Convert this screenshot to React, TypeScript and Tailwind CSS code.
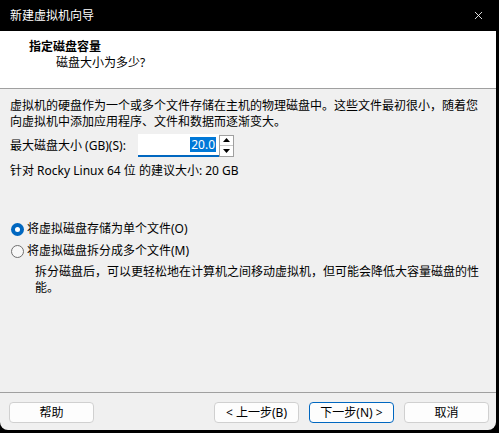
import React, { useState } from 'react';
import { X } from 'lucide-react';

const font = { fontFamily: '"Noto Sans", "Noto Sans CJK SC", sans-serif' };

const WizardButton: React.FC<{ label: string; primary?: boolean }> = ({ label, primary }) => (
  <button
    className={`w-[85px] h-[21px] rounded-[4px] bg-[#fdfdfd] text-[12px] leading-none text-black flex items-center justify-center border ${
      primary ? 'border-[#0067c0]' : 'border-[#d0d0d0]'
    }`}
  >
    {label}
  </button>
);

const Radio: React.FC<{ checked: boolean; label: string; onClick: () => void }> = ({ checked, label, onClick }) => (
  <div className="flex items-center h-[16px] cursor-default" onClick={onClick}>
    {checked ? (
      <span className="ml-[11px] w-[13px] h-[13px] rounded-full bg-[#0067c0] flex items-center justify-center">
        <span className="w-[5px] h-[5px] rounded-full bg-white" />
      </span>
    ) : (
      <span className="ml-[11px] w-[13px] h-[13px] rounded-full border border-[#6f6f6f] bg-[#f7f7f7]" />
    )}
    <span className="ml-[3px]">{label}</span>
  </div>
);

export default function App() {
  const [single, setSingle] = useState(true);

  return (
    <div className="w-[499px] h-[433px] bg-black text-[12px] leading-[16px] text-black" style={font}>
      <div className="w-[496px] h-[430px] bg-[#f0f0f0] rounded-b-[8px] overflow-hidden flex flex-col">
        {/* Title bar */}
        <div className="h-[31px] bg-black text-white flex items-center justify-between pl-[10px] pr-[11px]">
          <span>新建虚拟机向导</span>
          <X size={13} strokeWidth={1.6} />
        </div>

        {/* Header */}
        <div className="h-[58px] bg-white border-b border-[#a0a0a0] pt-[8px]">
          <div className="pl-[29px] font-bold">指定磁盘容量</div>
          <div className="pl-[56px] mt-[0px]">磁盘大小为多少?</div>
        </div>

        {/* Body */}
        <div className="flex-1 pl-[10px] pr-[10px] pt-[9px]">
          <p>
            虚拟机的硬盘作为一个或多个文件存储在主机的物理磁盘中。这些文件最初很小，随着您
            <br />
            向虚拟机中添加应用程序、文件和数据而逐渐变大。
          </p>

          <div className="flex items-center mt-[4px] h-[23px]">
            <span className="w-[128px]">最大磁盘大小 (GB)(S):</span>
            <div className="w-[81px] h-[23px] bg-white border-b-2 border-[#0067c0] flex items-center justify-end pr-[3px]">
              <span className="bg-[#0078d7] text-white px-[1px] leading-[15px]">20.0</span>
            </div>
            <div className="w-[15px] h-[22px] border border-[#a0a0a0] bg-white flex flex-col ml-[0px]">
              <div className="flex-1 flex items-center justify-center border-b border-[#c8c8c8]">
                <svg width="7" height="4" viewBox="0 0 7 4">
                  <polygon points="3.5,0 7,4 0,4" fill="#000" />
                </svg>
              </div>
              <div className="flex-1 flex items-center justify-center">
                <svg width="7" height="4" viewBox="0 0 7 4">
                  <polygon points="0,0 7,0 3.5,4" fill="#000" />
                </svg>
              </div>
            </div>
          </div>

          <p className="mt-[6px]">针对 Rocky Linux 64 位 的建议大小: 20 GB</p>

          <div className="mt-[42px] -ml-[10px] flex flex-col gap-[6px]">
            <Radio checked={single} label="将虚拟磁盘存储为单个文件(O)" onClick={() => setSingle(true)} />
            <Radio checked={!single} label="将虚拟磁盘拆分成多个文件(M)" onClick={() => setSingle(false)} />
          </div>

          <p className="mt-[5px] pl-[25px]">
            拆分磁盘后，可以更轻松地在计算机之间移动虚拟机，但可能会降低大容量磁盘的性
            <br />
            能。
          </p>
        </div>

        {/* Footer */}
        <div className="border-t border-[#a0a0a0] pt-[9px] pb-[7px] pl-[9px] pr-[7px] flex items-center">
          <WizardButton label="帮助" />
          <div className="flex-1" />
          <div className="flex gap-[10px]">
            <WizardButton label="< 上一步(B)" />
            <WizardButton label="下一步(N) >" primary />
            <WizardButton label="取消" />
          </div>
        </div>
      </div>
    </div>
  );
}
